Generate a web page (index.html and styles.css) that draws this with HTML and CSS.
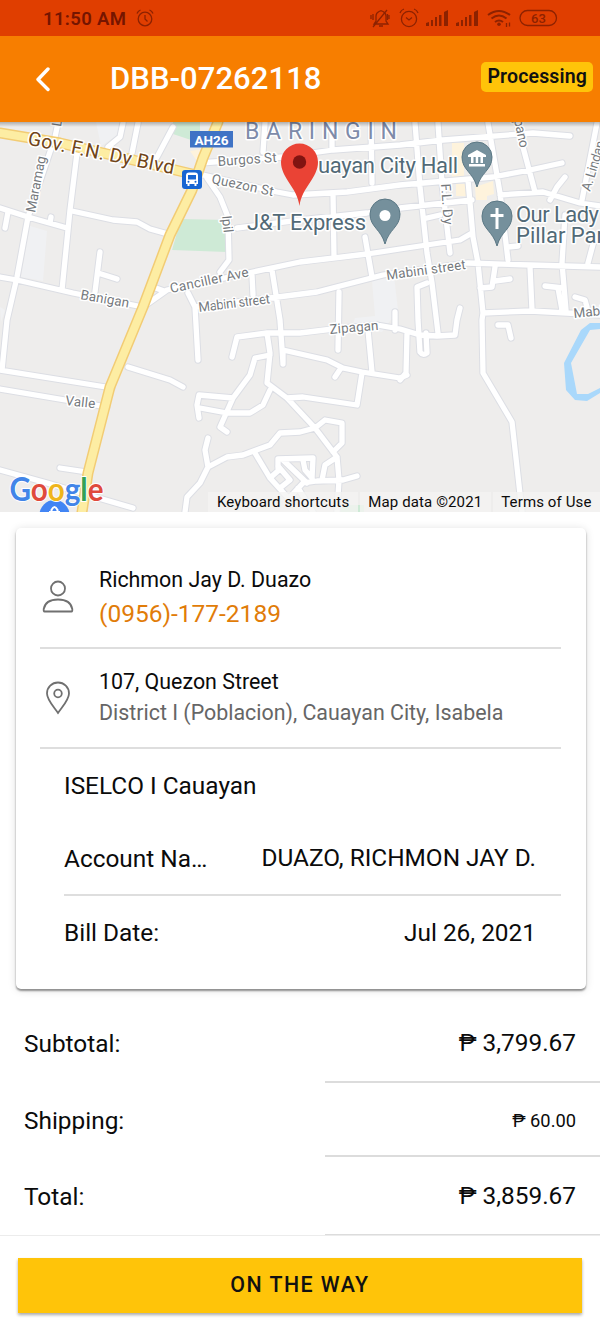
FILE: index.html
```html
<!DOCTYPE html>
<html lang="en">
<head>
<meta charset="utf-8">
<title>DBB-07262118</title>
<link rel="stylesheet" href="styles.css">
</head>
<body>
<div class="statusbar">
  <span class="clock">11:50 AM</span>
  <svg class="alarm" width="18" height="18" viewBox="0 0 18 18"><circle cx="9" cy="10" r="6.8"/><path d="M9 6v4l2.5 2.5M1 4.500Q2 2 4.500 1M13.500 1Q16 2 17 4.500"/></svg>
  <svg class="tray" width="190" height="22" viewBox="370 7 190 22">
    <path d="M374 24h14l-2-3v-5q0-3-3-4.500l-2-.8-2 .8q-3 1.500-3 4.500v5zM379 26h4M387 10l-14 17M371 15v4M389 15v4M373 14v6M387.500 14v6"/>
    <circle cx="409" cy="19" r="7.600"/><path d="M406 17.500l3 2.500 3-2.500M400 13q1-3 4-4M414 9q3 1 4 4"/>
    <g class="bars"><path d="M426 26v-3l3-1v4zM431 26v-6h2v6zM435 26v-9h2v9zM439 26v-11h2.500v11zM444 26v-14l4-2v16z"/><path d="M456 26v-3l3-1v4zM461 26v-6h2v6zM465 26v-9h2v9zM469 26v-11h2.500v11zM474 26v-14l4-2v16z"/></g>
    <path class="wifi" d="M488 15q11-8 22 0M491.500 18.500q7.500-6 15 0M495 22q4-3 8 0"/><circle class="dot" cx="499" cy="24.300" r="1.800"/><path d="M506.500 23v4M509.500 22.500v4"/>
    <rect x="520" y="10.500" width="36.500" height="15" rx="7.500"/>
    <text x="538.500" y="23" text-anchor="middle">63</text>
  </svg>
</div>
<header class="header">
  <svg class="back" width="16" height="26" viewBox="0 0 16 26"><path d="M14 3L4 13.500l10 10"/></svg>
  <h1 class="title">DBB-07262118</h1>
  <span class="badge">Processing</span>
</header>
<div class="map">
<svg width="600" height="390" viewBox="0 122 600 390">
  <defs>
    <path id="roads" d="M77 153L70 210 62 290M58 123L55 137 28 217 17 277 7 320 2 370M0 208L28 217 67 228M8 212L5 228M51 217L50 223M72 211L113 220 137 222 150 229 168 234M0 277L17 280 73 293 133 305 143 307M100 252L95 292M98 273L117 279M123 123L120 137 108 147M138 123L132 153M173 127L157 157M143 307L167 290 253 272 300 262 367 254 400 249 460 240 472 233M153 287L164 291M188 293L195 307 198 360M200 163L283 157 333 150 400 145 443 140 533 133 570 136M203 175L277 192 293 195 347 192 400 185 493 177 530 170 562 163M207 178L220 197 228 217 229 260 220 272M237 228L300 220 367 213 400 208 472 200M195 307L270 298 317 292 383 275 467 263 530 265 600 267M265 123L263 152M332 125V150M371 123L372 183M333 193L334 257M365 237L372 277M252 275L253 295M272 270L280 320 283 363M339 292L338 350M395 312V330M415 123L420 187 427 253 432 283 438 333M438 123L442 183 450 253M488 123L500 193 508 260M468 180L473 237 478 263 483 313M517 123L523 147 535 192M500 195L543 192 580 203 600 206M565 177L557 187 550 200M597 123L582 200M565 215L562 263 566 310M595 237L588 263M427 218L440 215M530 267L532 310M495 267L492 287 480 288M495 281L510 279M545 286L563 288M558 288L562 310M483 313L530 311 567 313 600 315M575 297L585 300 587 307M427 283L417 287 418 320 420 352Q423 356 427 353L426 333M460 308L457 320 455 335M508 247L518 246M377 325L400 329 420 335 437 336 455 335M407 333L406 373 400 380M483 313L482 320 483 373 512 422 522 512M498 325L508 325 511 338M232 357L237 337 267 333 300 333 333 329 377 325M267 333L270 353 267 383 287 398 315 428 337 457 339 480 337 512M270 355L255 358 250 375 233 398 220 427 227 432M233 398L199 395 197 405 199 418M200 408L227 413 250 413 263 405 270 390M283 350L327 360 343 368 362 372 400 378 407 375M283 350V364M335 377L341 368M368 330L372 372M362 373L357 405 303 397 287 398M315 428L325 420 342 423V443L333 452M315 428L300 432 280 433 270 445 243 455 227 457 208 467 200 483 187 497 185 512M208 438L205 450 208 467M255 453L270 478 290 500M278 468V459L313 458 312 478M278 466L290 480 280 488M279 470L270 478M283 460L307 483M303 460L305 470 312 478M290 497L303 483 317 481 343 480 357 476M322 480L325 465 337 457M298 488L313 512M0 370L112 388M0 389L107 407M128 367L170 380 183 387M60 468L87 472M0 470L47 483 133 508"/>
    <path id="highway" d="M0 133L60 143 150 164 192 174M218 122L203 158 192 190 170 235 143 307 110 387 88 473 82 512"/>
    <g id="pin"><path d="M0 27C-4 12-15 10-15-3A15 15 0 0 1 15-3C15 10 4 12 0 27z"/></g>
  </defs>
  <rect class="land" y="122" width="600" height="390"/>
  <path class="park" d="M173 122h27v21l-27-9zM181 219l46 1v32l-55-2zM344 505h20v7h-26z"/>
  <path class="block" d="M30 226l17 5-4 50-22-4zM372 281l22-5 4 34-16 22-31-3 4-11 20-2zM96 122h25l-2 12-18 12zM0 307l5 3-4 12z"/>
  <path class="civic" d="M452 143h12v34h-12zM456 184h12v12h-12zM475 187l18-6 1 13-7 2v4h-11zM190 151l13-2-4 15z"/>
  <path class="water" d="M600 323L590 323 581 330 564 363 566 390 575 400 587 401 600 393V388L588 394 577 394 571 363 590 330 600 329z"/>
  <use class="road-edge" href="#roads"/><use class="road" href="#roads"/>
  <use class="highway-edge" href="#highway"/><use class="highway" href="#highway"/>
  <g class="streets">
    <text transform="translate(27 144.500) rotate(11.500)" class="blvd" textLength="149">Gov. F.N. Dy Blvd</text>
    <text transform="translate(35 213) rotate(-79)" textLength="57">Maramag</text>
    <text transform="translate(61 127) rotate(-82)">L</text>
    <text transform="translate(80 299) rotate(10)" textLength="49">Banigan</text>
    <text transform="translate(65 405) rotate(6)" textLength="30">Valle</text>
    <text transform="translate(218 166) rotate(-4)" textLength="59">Burgos St</text>
    <text transform="translate(211 183) rotate(12)" textLength="63">Quezon St</text>
    <text transform="translate(222 216) rotate(84)" textLength="17">Ipil</text>
    <text transform="translate(171 293) rotate(-12)" textLength="80">Canciller Ave</text>
    <text transform="translate(199 312) rotate(-7)" textLength="72">Mabini street</text>
    <text transform="translate(387 280) rotate(-8)" textLength="80">Mabini street</text>
    <text transform="translate(330 334) rotate(-5)" textLength="49">Zipagan</text>
    <text transform="translate(441 184) rotate(86)" textLength="41">F.L. Dy</text>
    <text transform="translate(514 120) rotate(78)" textLength="29">pano</text>
    <text transform="translate(590 192) rotate(-73)" textLength="52">A. Lindan</text>
    <text transform="translate(574 318) rotate(-6)">Mabi</text>
  </g>
  <text class="district" x="245" y="139" textLength="152">BARINGIN</text>
  <g class="places">
    <text x="318" y="173" textLength="140">uayan City Hall</text>
    <text x="247" y="230" textLength="119">J&amp;T Express</text>
    <text x="516" y="222" textLength="83">Our Lady</text>
    <text x="516" y="243">Pillar Par</text>
  </g>
  <g class="poi"><use href="#pin" x="385" y="217"/><use href="#pin" x="477" y="160"/><use href="#pin" x="497" y="219"/></g>
  <circle class="glyph" cx="385" cy="215.500" r="5.500"/>
  <path class="glyph" d="M477 150l9 5v2h-18v-2zM471 157h2.500v6H471zM475.700 157h2.500v6h-2.500zM480.500 157h2.500v6h-2.500zM469 164h16v2.500h-16zM495.500 208h3v6h5v3h-5v12h-3v-12h-5v-3h5z"/>
  <path class="marker" d="M299.500 206C297 187 281 178 281 162a18.500 18.500 0 0 1 37 0C318 178 302 187 299.500 206z"/><circle class="marker-dot" cx="299.500" cy="162" r="6.700"/>
  <path class="shield" d="M190 131h43v16.500h-43z"/><text class="shield-text" x="211.500" y="144.500" text-anchor="middle">AH26</text>
  <rect class="transit" x="182" y="170" width="20" height="19" rx="3"/>
  <path class="glyph" d="M189 172.500h6q3 0 3 3V184h-1.500v2h-2v-2h-5v2h-2v-2H186v-8.500q0-3 3-3z"/><path class="transit" d="M188 175h8v4.500h-8z"/><circle class="transit" cx="188.500" cy="181.700" r="1"/><circle class="transit" cx="195.500" cy="181.700" r="1"/>
  <circle class="lockpin" cx="54.500" cy="515" r="15"/><path class="lock" d="M51.500 513v-3q3-6 6 0v3M49 512h11"/>
  <text class="google" x="9.500" y="501" textLength="94" lengthAdjust="spacingAndGlyphs"><tspan class="blue">G</tspan><tspan class="red">o</tspan><tspan class="yellow">o</tspan><tspan class="blue">g</tspan><tspan class="green">l</tspan><tspan class="red">e</tspan></text>
</svg>
<div class="credits"><span>Keyboard shortcuts</span><span>Map data ©2021</span><span>Terms of Use</span></div>
</div>
<main class="content">
  <section class="card">
    <div class="contact person">
      <svg class="icon" width="34" height="36" viewBox="0 0 34 36"><circle cx="17" cy="9.500" r="7"/><path d="M3.500 32.500Q2.500 32.500 2.700 30C4 23 10 20.500 17 20.500S30 23 31.300 30q.2 2.500-.8 2.500z"/></svg>
      <div class="lines"><div class="primary">Richmon Jay D. Duazo</div><div class="phone">(0956)-177-2189</div></div>
    </div>
    <div class="contact address">
      <svg class="icon" width="34" height="36" viewBox="0 0 34 36"><path d="M17 33C13 27 6 20 6 13.500a11 11 0 0 1 22 0C28 20 21 27 17 33z"/><circle cx="17" cy="13.500" r="3.800"/></svg>
      <div class="lines"><div class="primary">107, Quezon Street</div><div class="secondary">District I (Poblacion), Cauayan City, Isabela</div></div>
    </div>
    <div class="biller">ISELCO I Cauayan</div>
    <div class="field account"><span class="label">Account Name:</span><span class="name">DUAZO, RICHMON JAY D.</span></div>
    <div class="field date"><span>Bill Date:</span><span>Jul 26, 2021</span></div>
  </section>
  <section class="totals">
    <div class="total subtotal"><span>Subtotal:</span><span class="amount">₱ 3,799.67</span></div>
    <div class="total shipping"><span>Shipping:</span><span class="amount small">₱ 60.00</span></div>
    <div class="total grand"><span>Total:</span><span class="amount">₱ 3,859.67</span></div>
  </section>
</main>
<footer class="footer"><button class="action">ON THE WAY</button></footer>
</body>
</html>
```
FILE: styles.css
```css
* { box-sizing: border-box; }
body { margin: 0; width: 600px; height: 1333px; overflow: hidden; background: #fff; color: #0b0b0b; font-family: Roboto, "Noto Sans", sans-serif; display: flex; flex-direction: column; }
svg { display: block; flex: none; }

.statusbar { height: 36px; background: #e03e00; display: flex; align-items: center; padding: 0 40px 0 43px; color: #751500; }
.clock { font-size: 18.5px; font-weight: 600; letter-spacing: .35px; white-space: nowrap; padding-top: 2px; width: 93px; }
.alarm { fill: none; stroke: #8d2200; stroke-width: 1.3; }
.tray { margin-left: auto; fill: none; stroke: #8d2200; stroke-width: 1.3; }
.tray .bars, .tray .dot { fill: #8d2200; stroke: none; }
.tray .wifi { stroke-width: 2; }
.tray text { fill: #8d2200; stroke: none; font-size: 13px; font-weight: 500; }

.header { height: 86px; background: #f77e00; display: flex; align-items: center; padding: 0 7px 0 34px; flex: none; }
.back { fill: none; stroke: #fff; stroke-width: 3.4; stroke-linecap: round; stroke-linejoin: round; }
.title { margin: -1px 0 0 60px; font-size: 31px; font-weight: 500; letter-spacing: .05px; color: #fff; }
.badge { margin: -5px 0 0 auto; height: 30px; padding: 0 6px; border-radius: 5px; background: #ffc409; color: #111; font-size: 19.500px; letter-spacing: .15px; line-height: 29px; font-weight: 600; }

.map { height: 390px; position: relative; flex: none; }
.map::before { content: ""; position: absolute; inset: 0 0 auto; height: 5px; background: linear-gradient(#0004, #0000); }
.land { fill: #eeedec; }
.park { fill: #ceead6; }
.block { fill: #f0f1f3; }
.civic { fill: #fef3dc; }
.water { fill: #a9d8fb; }
.road, .road-edge, .highway, .highway-edge { fill: none; stroke-linejoin: round; stroke-linecap: round; }
.road-edge { stroke: #dcdee4; stroke-width: 7.3; }
.road { stroke: #fff; stroke-width: 5.3; }
.highway-edge { stroke: #f2cc74; stroke-width: 11; }
.highway { stroke: #fdeda3; stroke-width: 8; }
.streets text, .district, .places text { stroke: #fff; stroke-width: 3px; stroke-linejoin: round; paint-order: stroke; }
.streets text { fill: #75797d; font-size: 13.500px; font-weight: 400; }
.streets .blvd { fill: #704519; font-size: 19.500px; font-weight: 400; }
.district { fill: #7e8ba9; font-size: 23px; }
.places text { fill: #526a77; font-size: 22px; }
.poi { fill: #75909c; stroke: #5b7885; stroke-width: 1; }
.glyph { fill: #fff; }
.marker { fill: #ea4335; }
.marker-dot { fill: #811411; }
.shield { fill: #3f73c5; }
.shield-text { fill: #fff; font-size: 13.500px; font-weight: 700; }
.transit { fill: #1765d2; }
.lockpin { fill: #4285f4; }
.lock { fill: none; stroke: #fff; stroke-width: 2; }
.google { font-family: Lato, sans-serif; font-size: 32px; font-weight: 700; stroke: #fff; stroke-width: 2px; paint-order: stroke; }
.blue { fill: #4285e8; } .red { fill: #df4a3c; } .yellow { fill: #efb51c; } .green { fill: #35a153; }
.credits { position: absolute; right: 0; bottom: 0; height: 20px; display: flex; gap: 2px; font-size: 15px; line-height: 21px; letter-spacing: .12px; white-space: nowrap; }
.credits span { background: #f4f3f2c8; padding: 0 8.500px; }

.card { margin: 16px 14px 0 16px; height: 461px; border-radius: 5px; background: #fff; box-shadow: 0 2px 2px #0006, 0 1px 8px #0002; padding: 19px 25px 0 24px; }
.contact { display: flex; align-items: center; border-bottom: 2px solid #dedede; white-space: nowrap; }
.icon { margin-left: 1px; fill: none; stroke: #707070; stroke-width: 1.8; }
.lines { margin-left: 24px; }
.person { height: 102px; }
.person .lines { padding-top: 3px; }
.address { height: 100px; }
.primary { font-size: 21.400px; line-height: 30px; }
.phone { color: #e17c08; font-size: 24.500px; line-height: 38px; }
.secondary { color: #666; font-size: 21.400px; line-height: 32px; }
.biller { margin-left: 24px; height: 73px; line-height: 73px; font-size: 24.400px; }
.field { margin-left: 24px; height: 74px; line-height: 73px; padding-right: 25px; display: flex; justify-content: space-between; font-size: 24.400px; white-space: nowrap; }
.account { border-bottom: 2px solid #dedede; }
.account .name { line-height: 71px; }
.label { width: 146px; overflow: hidden; text-overflow: ellipsis; }

.totals { height: 246px; font-size: 24.400px; padding-top: 20px; }
.total { display: flex; justify-content: space-between; padding-left: 24px; }
.total .amount { width: 275px; padding-right: 24px; text-align: right; border-bottom: 2px solid #dcdcdc; }
.subtotal { height: 74px; line-height: 70px; }
.subtotal .amount { line-height: 67px; }
.shipping { height: 74px; line-height: 75px; }
.grand { height: 79px; line-height: 80px; }
.grand .amount { line-height: 77px; }
.total .small { font-size: 18.300px; }
.footer { height: 98px; border-top: 1px solid #ececec; padding: 22px 18px 0; }
.action { width: 100%; height: 55px; padding: 0 0 3px; border: 0; background: #ffc409; box-shadow: 0 2px 3px #0005; color: #111; font: 500 21.400px Roboto, sans-serif; letter-spacing: 1.45px; display: block; }
```
